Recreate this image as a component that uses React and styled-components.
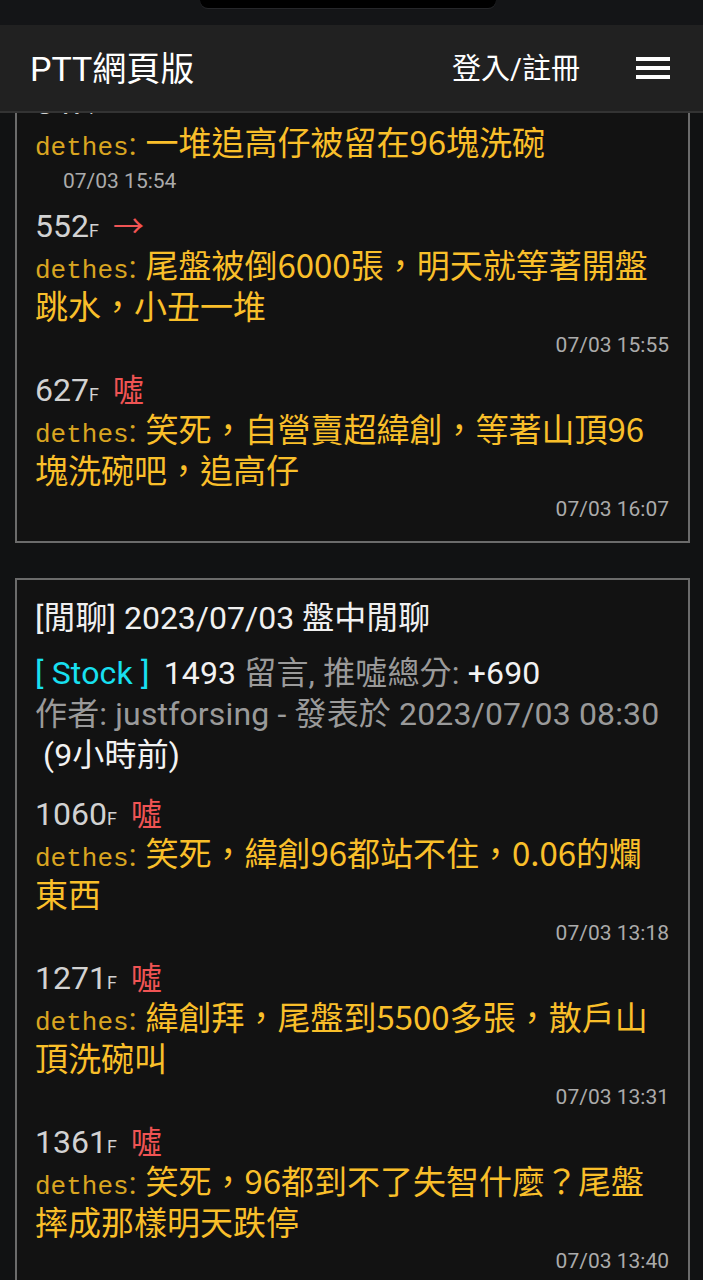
import React from 'react';
import styled, {createGlobalStyle} from 'styled-components';

const GlobalStyle = createGlobalStyle`
    html, body {
        margin: 0;
        padding: 0;
        background: #111213;
        height: 100%;
    }
    body {
        font-family: Roboto, "Noto Sans CJK TC", sans-serif;
        color: #e6e6e6;
        overflow: hidden;
    }
`;

const Page = styled.div`
    display: flex;
    flex-direction: column;
    height: 1280px;
    overflow: hidden;
`;

const StatusBar = styled.div`
    flex: 0 0 25px;
    display: flex;
    justify-content: center;
    padding-right: 7px;
    background: #141517;
`;

const Notch = styled.div`
    width: 296px;
    height: 8px;
    background: #000;
    border-radius: 0 0 12px 12px;
    box-shadow: 0 1px 0 #26272a;
`;

const Header = styled.header`
    position: relative;
    z-index: 2;
    flex: 0 0 86px;
    display: flex;
    align-items: center;
    padding: 0 33px 0 30px;
    background: #212121;
    border-bottom: 2px solid #333;
`;

const Brand = styled.div`
    flex: 1;
    font-size: 34px;
    color: #fff;
    margin-bottom: 4px;
`;

const Login = styled.div`
    font-size: 29px;
    color: #fff;
    margin: 0 56px 4px 0;
`;

const Burger = styled.div`
    display: flex;
    flex-direction: column;
    gap: 5px;

    span {
        display: block;
        width: 34px;
        height: 4px;
        background: #fff;
    }
`;

const Feed = styled.main`
    flex: 1;
    overflow: hidden;
    padding: 0 13px 0 15px;
`;

const Card = styled.section`
    border: 2px solid #6b6b6b;
    background: #121212;
    padding: ${({$cut}) => ($cut ? '0' : '18px')} 19px 17px 18px;
    margin-top: ${({$cut}) => ($cut ? '-32px' : '35px')};
    border-top-color: ${({$cut}) => ($cut ? 'transparent' : '#6b6b6b')};
`;

const Title = styled.div`
    font-size: 32px;
    line-height: 41px;
    color: #f0f0f0;
    margin-bottom: 14px;
`;

const MetaLine = styled.div`
    font-size: 32px;
    line-height: 41px;
    letter-spacing: 0.15px;
    color: #9a9a9a;
`;

const Board = styled.span`
    color: #18e0f0;
    margin-right: 6px;
`;

const Bright = styled.span`
    color: #f2f2f2;
`;

const Posts = styled.div`
    margin-top: 18px;
`;

const Push = styled.div`
    margin-bottom: 10px;

    &:last-child {
        margin-bottom: 0;
    }
`;

const Floor = styled.div`
    height: 41px;
    font-size: 32px;
    line-height: 41px;
    color: #d2d2d2;
    white-space: nowrap;

    small {
        font-size: 18px;
        line-height: 1;
        margin-right: 14px;
    }
`;

const Tag = styled.span`
    color: #f05454;
    font-size: 31px;
    line-height: 1;
`;

const Comment = styled.div`
    margin-top: -3px;
    font-family: "Noto Sans CJK TC", Roboto, sans-serif;
    font-size: 33px;
    line-height: 41px;
    color: #f9bf2a;
`;

const Author = styled.span`
    font-family: "Liberation Mono", monospace;
    font-size: 26px;
    line-height: 1;
    color: #d9a521;
`;

const Colon = styled.span`
    font-family: Roboto, sans-serif;
    font-size: 32px;
    line-height: 1;
    color: #d9a521;
    margin-right: 9px;
`;

const Time = styled.div`
    margin-top: 4px;
    font-size: 21px;
    line-height: 30px;
    color: #ababab;
    text-align: ${({$left}) => ($left ? 'left' : 'right')};
    padding-left: ${({$left}) => ($left ? '28px' : '0')};
`;

const pushes1 = [
    {floor: 547, tag: '→', text: '一堆追高仔被留在96塊洗碗', time: '07/03 15:54', left: true},
    {floor: 552, tag: '→', text: '尾盤被倒6000張，明天就等著開盤跳水，小丑一堆', time: '07/03 15:55'},
    {floor: 627, tag: '噓', text: '笑死，自營賣超緯創，等著山頂96塊洗碗吧，追高仔', time: '07/03 16:07'},
];

const pushes2 = [
    {floor: 1060, tag: '噓', text: '笑死，緯創96都站不住，0.06的爛東西', time: '07/03 13:18'},
    {floor: 1271, tag: '噓', text: '緯創拜，尾盤到5500多張，散戶山頂洗碗叫', time: '07/03 13:31'},
    {floor: 1361, tag: '噓', text: '笑死，96都到不了失智什麼？尾盤摔成那樣明天跌停', time: '07/03 13:40'},
];

const PushItem = ({floor, tag, text, time, left}) => (
    <Push>
        <Floor>
            {floor}<small>F</small><Tag>{tag}</Tag>
        </Floor>
        <Comment>
            <Author>dethes</Author><Colon>:</Colon>{text}
        </Comment>
        <Time $left={left}>{time}</Time>
    </Push>
);

export default function App() {
    return (
        <Page>
            <GlobalStyle />
            <StatusBar><Notch /></StatusBar>
            <Header>
                <Brand>PTT網頁版</Brand>
                <Login>登入/註冊</Login>
                <Burger><span /><span /><span /></Burger>
            </Header>
            <Feed>
                <Card $cut>
                    {pushes1.map((p) => <PushItem key={p.floor} {...p} />)}
                </Card>
                <Card>
                    <Title>[閒聊] 2023/07/03 盤中閒聊</Title>
                    <MetaLine>
                        <Board>[ Stock ]</Board> <Bright>1493</Bright> 留言, 推噓總分: <Bright>+690</Bright>
                    </MetaLine>
                    <MetaLine>作者: justforsing - 發表於 2023/07/03 08:30</MetaLine>
                    <MetaLine><Bright>&nbsp;(9小時前)</Bright></MetaLine>
                    <Posts>
                        {pushes2.map((p) => <PushItem key={p.floor} {...p} />)}
                    </Posts>
                </Card>
            </Feed>
        </Page>
    );
}
